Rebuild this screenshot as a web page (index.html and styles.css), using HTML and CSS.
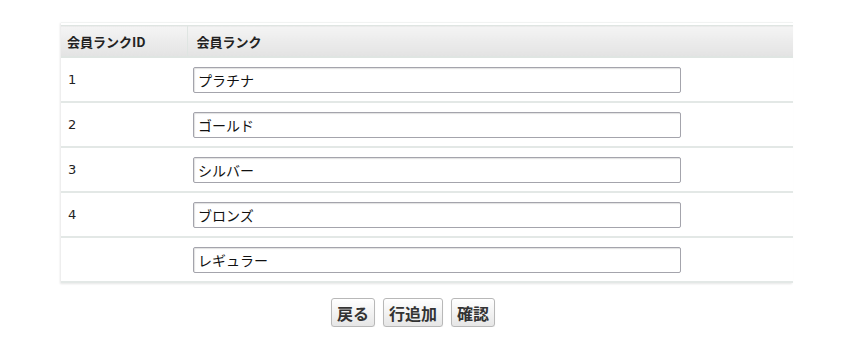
FILE: index.html
```html
<!DOCTYPE html>
<html lang="ja">
<head>
<meta charset="utf-8">
<link rel="stylesheet" href="styles.css">
</head>
<body>
<div class="page">
  <div class="table-box">
    <table class="rank-table">
      <thead>
        <tr>
          <th class="col-id">会員ランクID</th>
          <th class="col-name">会員ランク</th>
        </tr>
      </thead>
      <tbody>
        <tr><td class="cell-id">1</td><td class="cell-name"><input class="text-input" type="text" value="プラチナ"></td></tr>
        <tr><td class="cell-id">2</td><td class="cell-name"><input class="text-input" type="text" value="ゴールド"></td></tr>
        <tr><td class="cell-id">3</td><td class="cell-name"><input class="text-input" type="text" value="シルバー"></td></tr>
        <tr><td class="cell-id">4</td><td class="cell-name"><input class="text-input" type="text" value="ブロンズ"></td></tr>
        <tr><td class="cell-id"></td><td class="cell-name"><input class="text-input" type="text" value="レギュラー"></td></tr>
      </tbody>
    </table>
  </div>
  <div class="actions">
    <button class="btn" type="button">戻る</button>
    <button class="btn" type="button">行追加</button>
    <button class="btn" type="button">確認</button>
  </div>
</div>
</body>
</html>
```
FILE: styles.css
```css
html, body {
  margin: 0;
  padding: 0;
  background: #ffffff;
}
body {
  font-family: "Noto Sans CJK JP", "DejaVu Sans", sans-serif;
  color: #222;
}
.page {
  padding: 22px 0 0 61px;
  width: 732px;
}
.table-box {
  border-top: 1px solid #f1f3f2;
  padding-top: 2px;
  box-shadow: -1px 1px 2px rgba(0,0,0,0.10);
}
.rank-table {
  width: 732px;
  border-collapse: collapse;
  table-layout: fixed;
}
.rank-table th {
  height: 30px;
  padding: 0;
  text-align: left;
  font-size: 13px;
  font-weight: bold;
  color: #222;
  background: linear-gradient(#f4f4f4, #e3e3e3);
  border-top: 1px solid #dfe5e2;
  border-bottom: 2px solid #dfe5e2;
  line-height: 1;
}
.rank-table th.col-id {
  width: 126px;
  padding-left: 6px;
  border-right: 1px solid #dfe5e2;
  box-sizing: border-box;
}
.rank-table th.col-name {
  padding-left: 9px;
}
.rank-table td {
  height: 43px;
  padding: 0;
  border-bottom: 2px solid #e3e8e6;
}
.cell-id {
  padding-left: 7px !important;
  font-family: "DejaVu Sans", sans-serif;
  font-size: 13px;
  color: #222;
}
.cell-name {
  padding-left: 6px !important;
}
.text-input {
  display: block;
  width: 488px;
  height: 26px;
  box-sizing: border-box;
  margin: 0;
  padding: 0 4px;
  border: 1px solid #a4a4ac;
  border-radius: 2px;
  box-shadow: inset 1px 1px 1px rgba(0,0,0,0.12);
  font-family: "Noto Sans CJK JP", sans-serif;
  font-size: 14px;
  color: #111;
  background: #fff;
}
.actions {
  display: flex;
  gap: 8px;
  padding: 15px 0 0 270px;
}
.btn {
  height: 29px;
  padding: 0 5px;
  margin: 0;
  font-family: "Noto Sans CJK JP", sans-serif;
  font-size: 16px;
  font-weight: bold;
  color: #333;
  background: linear-gradient(#ffffff, #e6e6e6);
  border: 1px solid #b8b8b8;
  border-radius: 3px;
  box-shadow: 0 1px 1px rgba(0,0,0,0.08);
  line-height: 1;
}
```
